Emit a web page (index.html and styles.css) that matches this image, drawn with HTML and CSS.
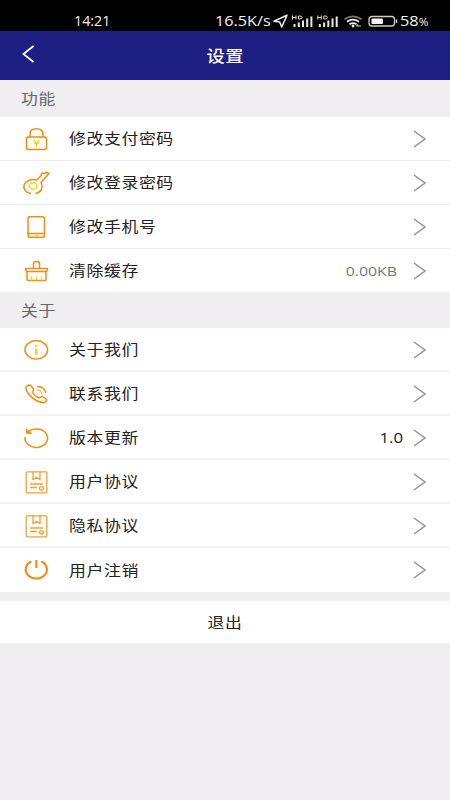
FILE: index.html
```html
<!DOCTYPE html>
<html lang="zh-CN">
<head>
<meta charset="utf-8">
<title>设置</title>
<link rel="stylesheet" href="styles.css">
</head>
<body>
<div class="status">
  <span class="time">14:21</span>
  <span class="speed">16.5K/s</span>
  <svg class="status-icons" width="128" height="18" viewBox="272 12 128 18">
    <path d="M274 21.200 287 15.300 281.700 27 279.700 22Z" fill="none" stroke="#eee" stroke-width="1.500" stroke-linejoin="round"/>
    <g id="signal">
      <path d="M292.500 15.500v4M296 15.500v4M292.500 17.500h3.500M298.500 16v3h1.500q2 0 2-1.500T300 16Z" fill="none" stroke="#ddd" stroke-width="1"/>
      <path d="M294.500 24v3M298.800 22.500v4.500M303 20.500v6.500M307.200 18.500v8.500M311.400 16.500v10.500" stroke="#e8e8e8" stroke-width="2"/>
    </g>
    <use href="#signal" x="25.300"/>
    <g fill="none" stroke-width="1.700">
      <path d="M344.500 19.300q8.500-6 17 0" stroke="#777"/>
      <path d="M347 21.800q6-4.300 12 0M349.500 24.300q3.500-2.500 7 0" stroke="#eee"/>
    </g>
    <circle cx="353" cy="26" r="1.400" fill="#eee"/>
    <path d="M357 26h4M358 24.500l-1.500 1.500" stroke="#ccc" stroke-width="1.200"/>
    <rect x="369" y="16.500" width="25.500" height="9.500" rx="3" fill="none" stroke="#ccc" stroke-width="1.300"/>
    <rect x="371.500" y="18.500" width="11.500" height="5.500" rx="1" fill="#f4f4f4"/>
    <path d="M396.500 19.500v3.500" stroke="#ccc" stroke-width="1.500"/>
  </svg>
  <span class="battery">58<small>%</small></span>
</div>
<header class="nav">
  <svg class="back" width="14" height="20" viewBox="0 0 14 20"><path d="M11.500 2 1.500 10l10 8" fill="none" stroke="#fff" stroke-width="1.800"/></svg>
  <h1><span>设置</span></h1>
</header>

<h2 class="section"><span>功能</span></h2>
<ul class="list">
  <li>
    <svg class="icon" viewBox="0 0 30 30"><rect x="5.500" y="13" width="20" height="12.500" rx="2"/><path d="M9 13V10.500Q9 4.800 15.500 4.800T22 10.500V13"/><path class="accent yen" d="M13 16.500l2.500 2.500 2.500-2.500M15.500 19v3.500M13.500 19.500h4"/></svg>
    <span class="label">修改支付密码</span><svg class="arrow" viewBox="0 0 13 18"><path d="M1 1l11 8-11 8"/></svg>
  </li>
  <li>
    <svg class="icon" viewBox="0 0 30 30"><path d="M9.500 25.500C4.500 24.500 1.800 20.500 3.300 16.500S10.500 10.500 15.500 12L20.500 7.500 20 6.500 21.500 5 23.500 5.500 26 4.300 28 5.500 20 14.500C22.500 19 20.500 24 15 25.500"/><ellipse class="accent" cx="12" cy="18" rx="4" ry="3.200"/></svg>
    <span class="label">修改登录密码</span><svg class="arrow" viewBox="0 0 13 18"><path d="M1 1l11 8-11 8"/></svg>
  </li>
  <li>
    <svg class="icon" viewBox="0 0 30 30"><rect x="7" y="4.700" width="16.500" height="20.600" rx="2"/><path d="M7 21.500h16.500"/><path class="accent" d="M14 23.500h3"/></svg>
    <span class="label">修改手机号</span><svg class="arrow" viewBox="0 0 13 18"><path d="M1 1l11 8-11 8"/></svg>
  </li>
  <li>
    <svg class="icon" viewBox="0 0 30 30"><path d="M12.500 12.500V8Q12.500 5.500 15.500 5.500T18.500 8V12.500M5 12.500H26Q27 12.500 26.500 13.500L25.500 15.500H6L4.500 13.500Q4 12.500 5 12.500ZM6 15.500V23.500Q6 24.500 7 24.500H24Q25 24.500 25 23.500V15.500"/><path class="accent" d="M10.500 21v3M15.500 21v3M20.500 21v3"/></svg>
    <span class="label">清除缓存</span><span class="value muted">0.00KB</span><svg class="arrow" viewBox="0 0 13 18"><path d="M1 1l11 8-11 8"/></svg>
  </li>
</ul>

<h2 class="section second"><span>关于</span></h2>
<ul class="list about">
  <li>
    <svg class="icon" viewBox="0 0 30 30"><ellipse cx="15.300" cy="14.800" rx="11.300" ry="9.200"/><path class="accent info" d="M15.300 9.800v2.200M15.300 13.500v6.500"/></svg>
    <span class="label">关于我们</span><svg class="arrow" viewBox="0 0 13 18"><path d="M1 1l11 8-11 8"/></svg>
  </li>
  <li>
    <svg class="icon" viewBox="0 0 30 30"><path d="M9.500 6.200C7 5.700 4.500 7.500 5 9.500 6.500 16 14 22.500 22 23.700 24 24 26 22 25.500 20.500L21.500 17.500C20 17 19 19.300 17.500 18.700 15 17.500 12.500 15.500 11.500 13.500 11 12 13.500 11.500 12.500 10Z"/><path class="accent phone-wave" d="M16.500 11Q20 11 20.500 14.300"/><path class="phone-wave" d="M16.500 7.500Q23.500 8 24.500 13.500"/></svg>
    <span class="label">联系我们</span><svg class="arrow" viewBox="0 0 13 18"><path d="M1 1l11 8-11 8"/></svg>
  </li>
  <li>
    <svg class="icon" viewBox="0 0 30 30"><path d="M4 14.500A11.300 9.200 0 1 0 7.500 8.500"/><path class="arrow-head" d="M5.500 6.500v3.800h4.800Z"/></svg>
    <span class="label">版本更新</span><span class="value version">1.0</span><svg class="arrow" viewBox="0 0 13 18"><path d="M1 1l11 8-11 8"/></svg>
  </li>
  <li>
    <svg class="icon thin" viewBox="0 0 30 30"><g id="document"><rect x="5.200" y="4.800" width="20.600" height="21" rx="1"/><path d="M12 4.800v8l3.500-2.500 3.500 2.500v-8M9.500 17h12M9.500 20.500h6"/><ellipse cx="20.500" cy="21.300" rx="2" ry="1.700"/></g></svg>
    <span class="label">用户协议</span><svg class="arrow" viewBox="0 0 13 18"><path d="M1 1l11 8-11 8"/></svg>
  </li>
  <li>
    <svg class="icon thin" viewBox="0 0 30 30"><use href="#document"/></svg>
    <span class="label">隐私协议</span><svg class="arrow" viewBox="0 0 13 18"><path d="M1 1l11 8-11 8"/></svg>
  </li>
  <li>
    <svg class="icon power" viewBox="0 0 30 30"><path d="M10.300 6.500A10.600 9 0 1 0 20.300 6.500M15.300 5v8"/></svg>
    <span class="label">用户注销</span><svg class="arrow" viewBox="0 0 13 18"><path d="M1 1l11 8-11 8"/></svg>
  </li>
</ul>
<button class="logout" type="button"><span>退出</span></button>
</body>
</html>
```
FILE: styles.css
```css
* { box-sizing: border-box; }
body {
  margin: 0;
  min-height: 800px;
  background: #f0eef1;
  color: #222;
  font-family: Roboto, "Noto Sans CJK SC", sans-serif;
  font-size: 14.5px;
  letter-spacing: .5px;
}
h1, h2, ul { margin: 0; padding: 0; font-weight: 400; }

.status {
  display: flex;
  align-items: center;
  height: 31px;
  padding: 11px 0 0 74px;
  background: #000;
  color: #f2f2f2;
  font: 500 14px/20px "Open Sans", sans-serif;
  letter-spacing: 0;
}
.time { width: 141px; transform: scaleX(1.02); transform-origin: left; }
.speed { width: 57px; white-space: nowrap; transform: scaleX(1.16); transform-origin: left; }
.status-icons { flex: none; }
.battery { white-space: nowrap; transform: scaleX(1.17); transform-origin: left; }
.battery small { font-size: 10px; }

.nav {
  display: flex;
  align-items: center;
  height: 49px;
  padding: 0 22px;
  background: #1e1f83;
  color: #fff;
}
.back { flex: none; margin-top: -3px; }
.nav h1 { flex: 1; margin-right: 14px; text-align: center; font-size: 15.8px; font-weight: 500; line-height: 24px; padding-top: 2px; }
.nav h1 span, .section span, .logout span {
  display: inline-block;
  transform: scaleX(1.16);
}

.section {
  display: flex;
  align-items: center;
  height: 37px;
  padding: 0 0 2px 21px;
  color: #666;
  font-size: 14.5px;
}
.section span { transform-origin: left; }
.section.second { height: 36px; }

.list { list-style: none; background: #fff; }
.list li {
  display: flex;
  align-items: center;
  height: 44px;
  padding: 0 24px 0 21px;
  border-bottom: 1px solid #ededee;
}
.list li:last-child { height: 43px; border-bottom: 0; }
.about li { border-bottom: 2px solid #f3f3f4; padding-top: 1px; }
.about li:last-child { height: 44px; padding-top: 0; }
.icon {
  flex: none;
  width: 30px;
  height: 30px;
  fill: none;
  stroke: #f58a14;
  stroke-width: 1.5;
  stroke-linecap: round;
  stroke-linejoin: round;
}
.icon .accent { stroke: #ffd21c; }
.icon .yen { stroke-width: 1.3; }
.icon .info { stroke-width: 2.6; stroke-linecap: butt; }
.icon .phone-wave { stroke-width: 1.3; }
.icon .arrow-head { fill: #f58a14; stroke-width: 1; }
.icon.thin { stroke: #f3a035; stroke-width: 1.3; }
.icon.power { stroke-width: 2.1; stroke-linecap: butt; }
.label { flex: 1; margin-left: 18px; padding-bottom: 2px; white-space: nowrap; transform: scaleX(1.165); transform-origin: left; }
.value { font-family: "Open Sans", sans-serif; letter-spacing: 0; transform: scaleX(1.22); transform-origin: right; margin-right: 16px; }
.muted { color: #777; font-size: 13px; }
.version { color: #222; font-size: 15px; margin-right: 10px; padding-bottom: 1px; transform: scaleX(1.12); }
.arrow { flex: none; width: 13px; height: 18px; fill: none; stroke: #929292; stroke-width: 1.5; }

.logout {
  display: block;
  width: 100%;
  height: 42px;
  margin-top: 9px;
  padding: 0 0 1px;
  border: 0;
  background: #fff;
  color: #222;
  font: inherit;
  letter-spacing: inherit;
}
```
